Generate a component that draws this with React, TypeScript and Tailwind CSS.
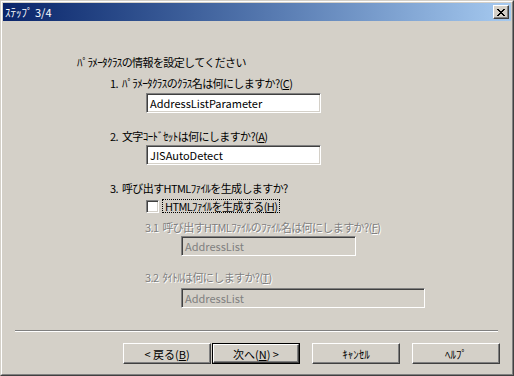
import React from 'react';

// Win2000 クラシック風ウィザード ダイアログ（ステップ 3/4）

const sunken =
  'border border-t-[#808080] border-l-[#808080] border-b-white border-r-white shadow-[inset_1px_1px_0_#404040,inset_-1px_-1px_0_#d4d0c8]';
const raised =
  'border border-t-white border-l-white border-b-[#404040] border-r-[#404040] shadow-[inset_-1px_-1px_0_#808080]';
const disabledText = 'text-[#808080] [text-shadow:1px_1px_0_#ffffff]';

function Key({ k }: { k: string }) {
  return <span className="underline underline-offset-[1px]">{k}</span>;
}

function Num({ n }: { n: string }) {
  return <span className="mr-[4px]">{n}</span>;
}

function TextBox({ value, width, disabled }: { value: string; width: string; disabled?: boolean }) {
  return (
    <div
      className={`${sunken} ${width} h-[20px] flex items-center pl-[3px] tracking-normal ${
        disabled ? 'bg-[#d4d0c8] text-[#808080]' : 'bg-white text-black'
      }`}
    >
      {value}
    </div>
  );
}

function Button({ children, isDefault, className = '' }: { children: React.ReactNode; isDefault?: boolean; className?: string }) {
  if (isDefault) {
    return (
      <div className={`h-[21px] w-[88px] border border-black ${className}`}>
        <div className={`${raised} h-full w-full flex items-center justify-center`}>{children}</div>
      </div>
    );
  }
  return (
    <div className={`${raised} h-[21px] w-[88px] flex items-center justify-center ${className}`}>{children}</div>
  );
}

export default function App() {
  return (
    <div className="w-[514px] h-[376px] bg-[#d4d0c8] border border-t-[#d4d0c8] border-l-[#d4d0c8] border-b-[#404040] border-r-[#404040] font-['Noto_Sans_CJK_JP','Liberation_Sans',sans-serif] text-[11px] leading-[12px] text-black">
      <div className="h-full flex flex-col border border-t-white border-l-white border-b-[#808080] border-r-[#808080] p-px">
        {/* タイトルバー */}
        <div className="h-[18px] flex items-center justify-between pl-[2px] pr-[2px] bg-gradient-to-r from-[#0a246a] to-[#a6caf0]">
          <span className="text-white">ｽﾃｯﾌﾟ 3/4</span>
          <div className={`${raised} w-[16px] h-[14px] bg-[#d4d0c8] flex items-center justify-center`}>
            <svg width="8" height="7" viewBox="0 0 8 7" shapeRendering="crispEdges">
              <path d="M0 0h2v1H0zM1 1h2v1H1zM2 2h4v1H2zM3 3h2v1H3zM2 4h4v1H2zM1 5h2v1H1zM0 6h2v1H0zM6 0h2v1H6zM5 1h2v1H5zM5 5h2v1H5zM6 6h2v1H6z" fill="#000" />
            </svg>
          </div>
        </div>

        {/* 本文 */}
        <div className="flex-1 flex flex-col tracking-[-0.6px]">
          <p className="mt-[35px] ml-[74px]">ﾊﾟﾗﾒｰﾀｸﾗｽの情報を設定してください</p>

          <p className="mt-[9px] ml-[107px]">
            <Num n="1." />ﾊﾟﾗﾒｰﾀｸﾗｽのｸﾗｽ名は何にしますか?(<Key k="C" />)
          </p>
          <div className="mt-[4px] ml-[143px]">
            <TextBox value="AddressListParameter" width="w-[175px]" />
          </div>

          <p className="mt-[17px] ml-[107px]">
            <Num n="2." />文字ｺｰﾄﾞｾｯﾄは何にしますか?(<Key k="A" />)
          </p>
          <div className="mt-[3px] ml-[143px]">
            <TextBox value="JISAutoDetect" width="w-[175px]" />
          </div>

          <p className="mt-[17px] ml-[107px]">
            <Num n="3." />呼び出すHTMLﾌｧｲﾙを生成しますか?
          </p>
          <div className="mt-[5px] ml-[143px] flex items-center h-[14px]">
            <div className={`${sunken} w-[13px] h-[13px] bg-white`} />
            <span className="ml-[3px] h-[14px] flex items-center px-[2px] border border-dotted border-black">
              HTMLﾌｧｲﾙを生成する(<Key k="H" />)
            </span>
          </div>

          <p className={`mt-[8px] ml-[142px] ${disabledText}`}>
            <Num n="3.1" />呼び出すHTMLﾌｧｲﾙのﾌｧｲﾙ名は何にしますか?(<Key k="F" />)
          </p>
          <div className="mt-[3px] ml-[178px]">
            <TextBox value="AddressList" width="w-[175px]" disabled />
          </div>

          <p className={`mt-[15px] ml-[142px] ${disabledText}`}>
            <Num n="3.2" />ﾀｲﾄﾙは何にしますか?(<Key k="T" />)
          </p>
          <div className="mt-[5px] ml-[178px]">
            <TextBox value="AddressList" width="w-[244px]" disabled />
          </div>

          {/* 区切り線 */}
          <div className="mt-[22px] ml-[12px] w-[483px] border-t border-t-[#808080] border-b border-b-white" />

          {/* ボタン */}
          <div className="mt-[11px] ml-[120px] flex tracking-normal">
            <Button className="w-[87px]">
              &lt; 戻る(<Key k="B" />)
            </Button>
            <Button isDefault className="ml-[1px]">
              次へ(<Key k="N" />) &gt;
            </Button>
            <Button className="ml-[12px]">ｷｬﾝｾﾙ</Button>
            <Button className="ml-[12px]">ﾍﾙﾌﾟ</Button>
          </div>
        </div>
      </div>
    </div>
  );
}
